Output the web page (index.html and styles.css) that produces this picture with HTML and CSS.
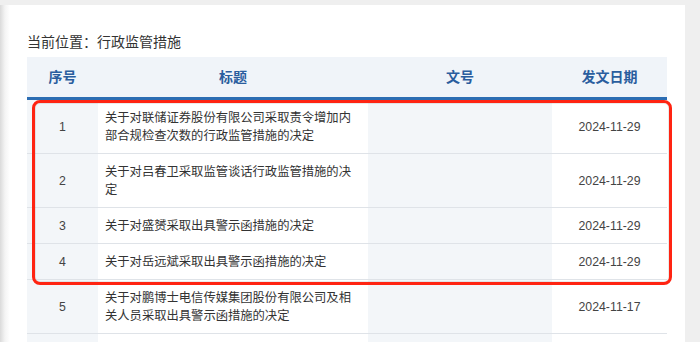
FILE: index.html
```html
<!DOCTYPE html>
<html lang="zh-CN">
<head>
<meta charset="utf-8">
<title>行政监管措施</title>
<link rel="stylesheet" href="styles.css">
</head>
<body>
<div class="page">
  <div class="crumb">当前位置：行政监管措施</div>
  <div class="table-wrap">
    <table class="list">
      <colgroup>
        <col class="c-no"><col class="c-title"><col class="c-doc"><col class="c-date">
      </colgroup>
      <thead>
        <tr><th>序号</th><th>标题</th><th>文号</th><th>发文日期</th></tr>
      </thead>
      <tbody>
        <tr><td class="no">1</td><td class="title">关于对联储证券股份有限公司采取责令增加内部合规检查次数的行政监管措施的决定</td><td class="doc"></td><td class="date">2024-11-29</td></tr>
        <tr><td class="no">2</td><td class="title">关于对吕春卫采取监管谈话行政监管措施的决定</td><td class="doc"></td><td class="date">2024-11-29</td></tr>
        <tr><td class="no">3</td><td class="title">关于对盛赟采取出具警示函措施的决定</td><td class="doc"></td><td class="date">2024-11-29</td></tr>
        <tr><td class="no">4</td><td class="title">关于对岳远斌采取出具警示函措施的决定</td><td class="doc"></td><td class="date">2024-11-29</td></tr>
        <tr><td class="no">5</td><td class="title">关于对鹏博士电信传媒集团股份有限公司及相关人员采取出具警示函措施的决定</td><td class="doc"></td><td class="date">2024-11-17</td></tr>
        <tr><td class="no">&nbsp;</td><td class="title">&nbsp;</td><td class="doc"></td><td class="date">&nbsp;</td></tr>
      </tbody>
    </table>
    <div class="highlight"></div>
  </div>
</div>
</body>
</html>
```
FILE: styles.css
```css
html, body {
  margin: 0;
  padding: 0;
  background: #efefef;
  height: 342px;
  overflow: hidden;
}
body {
  font-family: "Liberation Sans", "Noto Sans CJK SC", sans-serif;
  color: #333;
}
.page {
  margin-top: 5px;
  width: 685px;
  height: 400px;
  background: linear-gradient(to right, #dadada 0, #f4f4f4 5px, #ffffff 10px);
  padding: 27px 0 0 27px;
  box-sizing: border-box;
}
.crumb {
  font-size: 14px;
  line-height: 20px;
  color: #333;
  margin-bottom: 5px;
}
.table-wrap {
  position: relative;
  width: 640px;
}
.list {
  width: 640px;
  table-layout: fixed;
  border-collapse: collapse;
}
.c-no { width: 71px; }
.c-title { width: 270px; }
.c-doc { width: 184px; }
.c-date { width: 115px; }
.list th {
  background: #f0f4f9;
  color: #2a5d9e;
  font-size: 14px;
  font-weight: bold;
  height: 40px;
  padding: 0;
  line-height: 20px;
  text-align: center;
  border-bottom: 3px solid #2c6db3;
}
.list td {
  font-size: 12.3px;
  line-height: 18px;
  padding: 9px 0 8px;
  border-bottom: 1px solid #dfe3e8;
  color: #333;
  vertical-align: middle;
}
.list td.no {
  text-align: center;
  background: #f3f6f9;
  color: #444;
}
.list td.title {
  padding-left: 7px;
  padding-right: 10px;
  background: #fff;
}
.list td.doc {
  background: #f3f6f9;
}
.list td.date {
  text-align: center;
  background: #fff;
  color: #444;
}
.highlight {
  position: absolute;
  left: 5px;
  top: 43px;
  width: 640px;
  height: 185px;
  box-sizing: border-box;
  border: 3px solid #ff2412;
  border-radius: 8px;
  box-shadow: inset 0 0 0 1px rgba(0, 0, 0, 0.08);
  pointer-events: none;
}
```
